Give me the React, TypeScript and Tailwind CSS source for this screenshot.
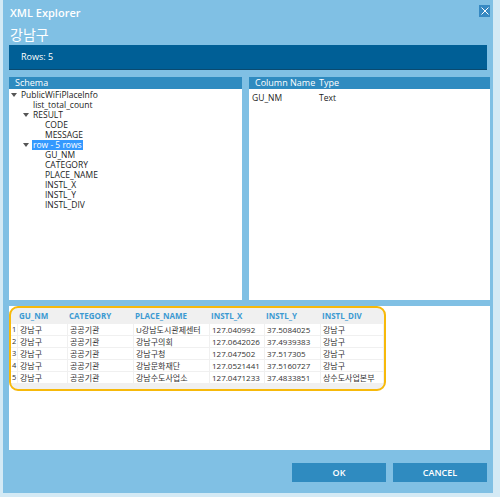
import React from 'react'

const font = { fontFamily: '"Open Sans", "Noto Sans CJK KR", sans-serif' }

type TreeItem = { label: string; depth: number; arrow?: boolean; selected?: boolean }

const tree: TreeItem[] = [
  { label: 'PublicWiFiPlaceInfo', depth: 0, arrow: true },
  { label: 'list_total_count', depth: 1 },
  { label: 'RESULT', depth: 1, arrow: true },
  { label: 'CODE', depth: 2 },
  { label: 'MESSAGE', depth: 2 },
  { label: 'row - 5 rows', depth: 1, arrow: true, selected: true },
  { label: 'GU_NM', depth: 2 },
  { label: 'CATEGORY', depth: 2 },
  { label: 'PLACE_NAME', depth: 2 },
  { label: 'INSTL_X', depth: 2 },
  { label: 'INSTL_Y', depth: 2 },
  { label: 'INSTL_DIV', depth: 2 },
]

const columns = ['GU_NM', 'CATEGORY', 'PLACE_NAME', 'INSTL_X', 'INSTL_Y', 'INSTL_DIV']

const rows = [
  ['강남구', '공공기관', 'U강남도시관제센터', '127.040992', '37.5084025', '강남구'],
  ['강남구', '공공기관', '강남구의회', '127.0642026', '37.4939383', '강남구'],
  ['강남구', '공공기관', '강남구청', '127.047502', '37.517305', '강남구'],
  ['강남구', '공공기관', '강남문화재단', '127.0521441', '37.5160727', '강남구'],
  ['강남구', '공공기관', '강남수도사업소', '127.0471233', '37.4833851', '상수도사업본부'],
]

const gridCols = 'grid-cols-[6px_49px_65px_75px_54px_55px_62px]'

function Arrow() {
  return (
    <svg width="6" height="4" viewBox="0 0 6 4" className="shrink-0">
      <path d="M0 0 L6 0 L3 4 Z" fill="#555" />
    </svg>
  )
}

export default function App() {
  return (
    <div className="w-[500px] h-[497px] bg-[#d4eaf5] overflow-hidden" style={font}>
      <div className="ml-[3px] w-[490px] h-[493px] bg-[#80c0e4] flex flex-col pl-[6px] pr-[3px]">
        {/* title bar */}
        <div className="flex items-start justify-between h-[24px]">
          <div className="text-white text-[11px] font-semibold pt-[5px] pl-[1px]">XML Explorer</div>
          <div className="w-[11px] h-[12px] bg-[#3689c2] mt-[5px] flex items-center justify-center">
            <svg width="8" height="8" viewBox="0 0 8 8">
              <path d="M0.5 0.5 L7.5 7.5 M7.5 0.5 L0.5 7.5" stroke="white" strokeWidth="1" />
            </svg>
          </div>
        </div>
        <div className="text-white text-[14px] leading-[16px] pt-[3px] pl-[1px] h-[21px]">강남구</div>

        {/* rows band */}
        <div className="h-[25px] bg-[#005f96] flex items-center pl-[12px] text-white text-[9px] mr-[3px] border-b border-[#0a4a70]">
          Rows: 5
        </div>

        {/* panels */}
        <div className="flex gap-[7px] mt-[7px] h-[223px]">
          <div className="w-[233px] bg-white flex flex-col">
            <div className="h-[12px] bg-[#2f8bc0] text-white text-[9px] leading-[12px] pl-[6px]">Schema</div>
            <div className="pt-[1px] text-[8.5px] text-[#222]">
              {tree.map((t) => (
                <div key={t.label} className="h-[10px] flex items-center" style={{ paddingLeft: 2 + t.depth * 12 }}>
                  <div className="w-[9px] flex items-center">{t.arrow && <Arrow />}</div>
                  <span
                    className={t.selected ? 'bg-[#3399ff] text-white px-[1px] leading-[10px]' : 'leading-[10px] px-[1px]'}
                  >
                    {t.label}
                  </span>
                </div>
              ))}
            </div>
          </div>
          <div className="flex-1 bg-white flex flex-col">
            <div className="h-[12px] bg-[#2f8bc0] text-white text-[9px] leading-[12px] flex">
              <span className="pl-[6px] w-[70px]">Column Name</span>
              <span>Type</span>
            </div>
            <div className="flex text-[8.5px] text-[#222] pt-[3px] pl-[3px]">
              <span className="w-[67px]">GU_NM</span>
              <span>Text</span>
            </div>
          </div>
        </div>

        {/* data panel */}
        <div className="mt-[6px] h-[144px] bg-white">
          <div className="w-[377px] h-[85px] border-2 border-[#f7b90a] rounded-[9px] bg-[#f0f0f0] overflow-hidden pt-[2px]">
            <div className={`grid ${gridCols} gap-x-px h-[11px] items-center text-[8px] font-bold text-[#3c9ad2]`}>
              <span />
              {columns.map((c) => (
                <span key={c} className="pl-[1px]">{c}</span>
              ))}
            </div>
            <div className={`grid ${gridCols} gap-px mt-[3px] text-[8px] text-[#333]`}>
              {rows.map((r, i) => (
                <React.Fragment key={i}>
                  <span className="h-[11px] leading-[11px] bg-white text-[7.5px] pl-[1px]">{i + 1}</span>
                  {r.map((c, j) => (
                    <span key={j} className="h-[11px] leading-[11px] bg-white pl-[2px] whitespace-nowrap overflow-hidden">
                      {c}
                    </span>
                  ))}
                </React.Fragment>
              ))}
            </div>
          </div>
        </div>

        {/* buttons */}
        <div className="flex justify-end gap-[7px] mt-[13px] mr-[3px]">
          <button className="w-[94px] h-[19px] bg-[#2f8bc0] text-white text-[9px] font-semibold">OK</button>
          <button className="w-[94px] h-[19px] bg-[#2f8bc0] text-white text-[9px] font-semibold">CANCEL</button>
        </div>
      </div>
    </div>
  )
}
